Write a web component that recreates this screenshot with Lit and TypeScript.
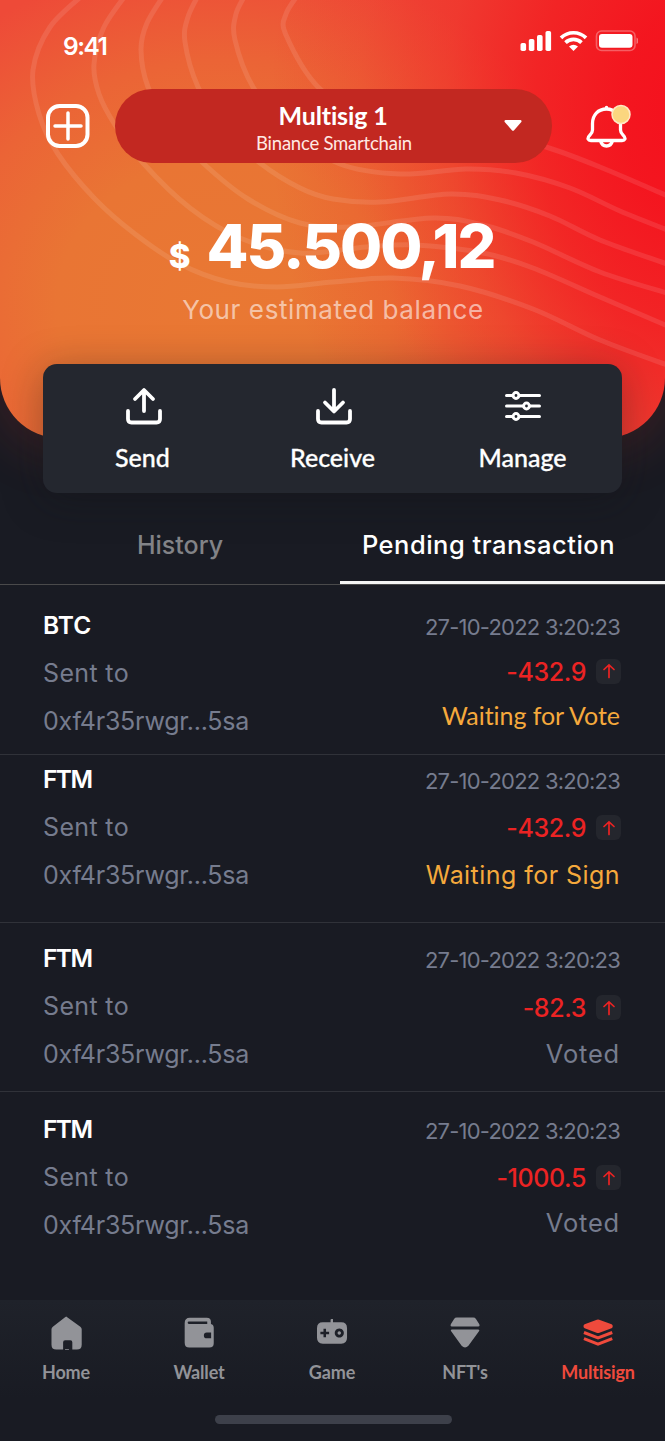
import { LitElement, html, css, svg } from "lit";
import { customElement } from "lit/decorators.js";

type Point = [number, number];

// Smooth open curve through a list of points.
const smooth = (p: Point[]) => {
  let d = `M${p[0][0]} ${p[0][1]}`;
  for (let i = 0; i < p.length - 1; i++) {
    const a = p[i - 1] ?? p[i], b = p[i], c = p[i + 1], e = p[i + 2] ?? c;
    d += `C${b[0] + (c[0] - a[0]) / 6} ${b[1] + (c[1] - a[1]) / 6} ${c[0] - (e[0] - b[0]) / 6} ${c[1] - (e[1] - b[1]) / 6} ${c[0]} ${c[1]}`;
  }
  return d;
};

const WAVES: Point[][] = [
  [[84, -6], [50, 27], [33, 70], [39, 114], [58, 154], [95, 199], [135, 234], [180, 264], [228, 282], [277, 287], [333, 282], [393, 278], [460, 286], [533, 309], [600, 340], [670, 366]],
  [[128, -8], [104, 27], [94, 64], [99, 94], [115, 125], [143, 163], [190, 208], [240, 238], [300, 253], [366, 247], [416, 245], [483, 253], [533, 268], [600, 297], [670, 327]],
  [[166, -8], [147, 23], [141, 50], [148, 87], [170, 127], [203, 163], [248, 199], [300, 223], [350, 227], [433, 218], [483, 225], [533, 242], [600, 272], [670, 294]],
  [[200, -8], [188, 17], [185, 42], [198, 87], [224, 129], [260, 163], [300, 188], [333, 199], [380, 202], [450, 194], [500, 200], [550, 216], [600, 240], [670, 265]],
  [[247, -8], [236, 14], [235, 40], [253, 87], [288, 130], [340, 164], [400, 174], [466, 169], [516, 173], [570, 188], [620, 211], [670, 231]],
  [[300, -8], [286, 14], [286, 35], [318, 87], [370, 122], [430, 135], [500, 137], [546, 147], [600, 167], [670, 197]],
];

const ROWS = [
  { coin: "BTC", amount: "-432.9", status: "Waiting for Vote", tone: "vote" },
  { coin: "FTM", amount: "-432.9", status: "Waiting for Sign", tone: "sign" },
  { coin: "FTM", amount: "-82.3", status: "Voted", tone: "done" },
  { coin: "FTM", amount: "-1000.5", status: "Voted", tone: "done" },
];

const NAV = [
  { label: "Home", icon: svg`<path d="M16 1.2 30.300 11.500q1.400 1 1.400 2.700V30q0 5-5 5H22v-7.500q0-2-2-2h-5.500q-2 0-2 2V35H5.500q-5 0-5-5V14.200q0-1.700 1.400-2.700L14.500 1.800q1.500-1.100 1.500-.6Z" /><path d="M14.500 34.500h4v.8h-4Z" />` },
  { label: "Wallet", icon: svg`<path fill-rule="evenodd" d="M6 2.300h17.500q4.300 0 4.300 4v2.300q2.900.7 2.900 4V28.500q0 4.500-4.500 4.500H5.500Q.7 33 .7 28V8Q.7 2.300 6 2.300ZM5 6.200q-1.200 0-1.200 1.200T5 8.600h19V6.200ZM23.500 17.500q-3 0-3 3t3 3H28V17.500Z" />` },
  { label: "Game", icon: svg`<path fill-rule="evenodd" d="M15 3.500h1.500V7H25q6 0 6 6v10q0 6-6 6H6q-6 0-6-6V13Q0 7 6 7h8V4.500q0-1 1-1ZM6.700 13.500v3.200H3.500v2.600h3.200v3.200h2.600v-3.200h3.200v-2.600H9.300V13.500ZM23 13.300a4.700 4.700 0 1 0 .01 0Zm0 2.900a1.800 1.800 0 1 1-.01 0Z" />` },
  { label: "NFT's", icon: svg`<path d="M7 2h17q1.800 0 2.800 1.500l3.300 5.300q1.200 2.400-1 2.400H2q-2.200 0-1-2.400L4.200 3.500Q5.200 2 7 2ZM2.200 14.300h26.700q2.100 0 1 2L19 31.200q-3.500 3.600-7 0L1.200 16.300q-1.100-2 1-2Z" />` },
  { label: "Multisign", icon: svg`<path d="M14.300 4.200q1.200-.5 2.400 0L29.500 9q1.200.5 1.200 2t-1.200 2.200L17 17.800q-1.500.6-3 0L1.700 13.200Q.5 12.500.5 11t1.200-2Z"/><path d="M1 17.500l14.500 5.500L30.200 17.500M1 23.800l14.500 5.700L30.200 23.800" fill="none" stroke="currentColor" stroke-width="3.200"/>` },
];

@customElement("app-root")
class AppRoot extends LitElement {
  static styles = css`
    :host { display: block; }
    * { box-sizing: border-box; }
    svg { display: block; flex: none; }
    .screen {
      width: 665px; height: 1441px; overflow: hidden; background: #191b23; color: #fff;
      font-family: Inter, "Open Sans", sans-serif; display: flex; flex-direction: column;
      white-space: nowrap; position: relative; font-variant-ligatures: none;
    }
    .hero {
      height: 438px; flex: none; position: relative; border-radius: 0 0 60px 60px;
      background:
        radial-gradient(ellipse 440px 560px at 710px 110px, #f50f1d 0%, #f4131ef2 20%, #f31a20c8 40%, #f1262578 60%, #f02c272e 80%, #f0302700 100%),
        radial-gradient(ellipse 400px 350px at 225px 305px, #e97833 0%, #e97534 42%, #eb6436 70%, #ee4a38 100%);
      box-shadow: 0 10px 55px #f03a2a30;
      display: flex; flex-direction: column; align-items: center;
    }
    .waves { position: absolute; inset: 0; }
    .status-bar { width: 100%; height: 89px; padding: 30px 27px 0 63px; display: flex; justify-content: space-between; position: relative; }
    .clock { font-size: 24.5px; line-height: 32px; font-weight: 600; letter-spacing: -1.5px; }
    .top-bar { width: 100%; height: 74px; padding: 0 33px 0 46px; display: grid; grid-template-columns: 69px 437px 1fr; align-items: center; position: relative; }
    .bell { justify-self: end; }
    .wallet-pick { height: 74px; border-radius: 37px; background: #c22821; position: relative; text-align: center; padding-top: 11px; font-family: Lato, sans-serif; }
    .wallet-name { font-size: 25px; line-height: 31px; font-weight: 700; letter-spacing: -.15px; margin-left: -1px; }
    .chain { font-size: 18.500px; line-height: 24px; color: #ffe9e4; letter-spacing: -.22px; padding-left: 1px; }
    .caret { position: absolute; right: 30px; top: 31px; }
    .balance { position: relative; height: 76px; margin: 45px 2px 0 0; display: flex; align-items: baseline; gap: 16px; font-weight: 800; line-height: 76px; }
    .currency { font-size: 33px; }
    .amount-total { font-size: 61px; letter-spacing: -2px; }
    .caption { position: relative; font-size: 26px; line-height: 32px; margin-top: 10px; color: #ffffff94; letter-spacing: .6px; padding-left: 1px; }
    .actions {
      position: relative; width: 579px; height: 129px; margin: -74px auto 0; flex: none; border-radius: 14px;
      background: #24272f; box-shadow: 0 6px 40px #10131659;
      display: grid; grid-template-columns: repeat(3, 190px); justify-content: center;
      font-family: Lato, sans-serif; font-size: 25px; font-weight: 500; -webkit-text-stroke: .3px #fff;
    }
    .action { display: flex; flex-direction: column; align-items: center; padding-top: 23px; line-height: 32px; gap: 16px; }
    .tabs { height: 92px; flex: none; display: flex; border-bottom: 1px solid #4a4a4b; font-size: 25px; font-weight: 500; text-align: center; line-height: 32px; position: relative; }
    .tab { width: 340px; padding: 36px 0 0 20px; color: #828387; }
    .tab.active { width: 325px; padding: 36px 28px 0 0; color: #fff; border-bottom: 3px solid #f4f4f4; }
    .pending { font-size: 25.500px; letter-spacing: .5px; }
    .list { flex: 1; display: grid; grid-template-rows: 170px 168px 169px 208px; color: #767c8e; font-size: 25px; line-height: 48px; }
    .row { display: flex; justify-content: space-between; padding: 0 45px 0 43px; border-bottom: 1px solid #303239; }
    .row:last-child { border: 0; }
    .side { display: flex; flex-direction: column; align-items: flex-start; }
    .side.end { align-items: flex-end; }
    .r0 { padding-top: 16px; } .r1 { padding-top: 0; } .r2 { padding-top: 11px; } .r3 { padding-top: 13px; }
    .coin { color: #fff; font-weight: 600; font-size: 24.500px; letter-spacing: -1.6px; }
    .r0 .coin { letter-spacing: 0; }
    .to { letter-spacing: .35px; }
    .address { letter-spacing: -.25px; }
    .date { font-size: 22px; letter-spacing: -.78px; margin-top: 2px; height: 47px; }
    .delta { display: flex; align-items: center; gap: 10px; color: #eb2323; font-weight: 500; height: 48px; letter-spacing: -.4px; margin-right: -1px; }
    .chip { width: 25px; height: 25px; border-radius: 6px; background: #24262d; display: grid; place-items: center; margin-top: -1px; }
    .state { height: 46px; line-height: 46px; }
    .r0 .delta { height: 43px; } .r0 .state { height: 46px; line-height: 44px; }
    .r2 .delta { height: 50px; } .r2 .state { line-height: 42px; }
    .r3 .delta { height: 48px; } .r3 .state { line-height: 41px; }
    .vote { font-family: Lato, sans-serif; color: #f5a93c; letter-spacing: -.05px; }
    .sign { color: #f5a93c; letter-spacing: .45px; }
    .done { font-size: 25.500px; letter-spacing: .8px; }
    .nav { height: 98px; flex: none; background: linear-gradient(#1f222a, #191b23); display: grid; grid-template-columns: repeat(5, 133px); font: 700 18px/24px Lato, sans-serif; color: #929398; letter-spacing: -.15px; font-variant-ligatures: none; }
    .item { display: flex; flex-direction: column; align-items: center; padding-top: 15px; gap: 9px; }
    .name { margin-left: -1px; }
    .item.active { color: #ef4a3c; }
    .home { height: 43px; flex: none; padding: 17px 0 0 215px; }
    .bar { width: 237px; height: 9px; border-radius: 5px; background: #3d404a; }
  `;

  render() {
    return html`<div class="screen">
      <header class="hero">
        <svg class="waves" width="665" height="438" fill="none" stroke="#fff" stroke-opacity=".1" stroke-width="5">
          ${WAVES.map((w) => svg`<path d=${smooth(w)} />`)}
        </svg>
        <div class="status-bar">
          <span class="clock">9:41</span>
          <svg width="118" height="22" viewBox="520 30 118 22">
            <g fill="#fff"><rect x="520.500" y="43" width="5.600" height="8" rx="1.800"/><rect x="528.800" y="39" width="5.600" height="12" rx="1.800"/><rect x="537" y="35" width="5.600" height="16" rx="1.800"/><rect x="545.500" y="31" width="5.600" height="20" rx="1.800"/></g>
            <g fill="none" stroke="#fff" stroke-width="3.700"><path d="M561 37.800a18 18 0 0 1 25 0M565.500 42.700a11.500 11.500 0 0 1 16 0"/></g><path d="M573.500 51l-4.500-4.600q4.500-3.300 9 0Z" fill="#fff"/>
            <rect x="596.500" y="31" width="38.500" height="19.500" rx="5" fill="none" stroke="#fff" stroke-opacity=".3" stroke-width="1.600"/><rect x="599" y="34" width="33.500" height="13.800" rx="3" fill="#fff"/><path d="M636.500 37.500q2 1 2 3.300t-2 3.300Z" fill="#fff" fill-opacity=".4"/>
          </svg>
        </div>
        <div class="top-bar">
          <svg width="44" height="44" fill="none" stroke="#fff" stroke-linecap="round"><rect x="2" y="2" width="39.500" height="40" rx="11.500" stroke-width="4"/><path d="M9 22h26M22 9v26" stroke-width="3.500"/></svg>
          <div class="wallet-pick">
            <div class="wallet-name">Multisig 1</div>
            <div class="chain">Binance Smartchain</div>
            <svg class="caret" width="18" height="12" fill="#fff"><path d="M1.500 0h15q1.600.6.800 1.900l-7.200 8.300q-1.100 1.200-2.200 0L.7 1.900Q-.1.600 1.500 0Z"/></svg>
          </div>
          <svg class="bell" width="46" height="46" viewBox="586 102 46 46" fill="none" stroke="#fff" stroke-width="3.300" stroke-linejoin="round" stroke-linecap="round">
            <path d="M606.500 108c-8.500 0-14 6-14 14.500v6.500q0 2.500-2.600 5.200c-3.500 3.500-1.500 5.300 1 5.300h31.200c2.500 0 4.500-1.800 1-5.300q-2.600-2.700-2.600-5.200v-6.500c0-8.500-5.500-14.500-14-14.500ZM600.500 140q1.500 5 6 5t6-5"/>
            <circle cx="606.500" cy="106.500" r="1" stroke-width="1.500"/>
            <circle cx="621" cy="113.500" r="9" fill="#fbd67f" stroke="#ffe9c4" stroke-width="1.500"/>
          </svg>
        </div>
        <div class="balance"><span class="currency">$</span><span class="amount-total">45.500,12</span></div>
        <div class="caption">Your estimated balance</div>
      </header>
      <section class="actions">
        <div class="action"><svg width="38" height="38" fill="none" stroke="#fff" stroke-width="3.800" stroke-linecap="round" stroke-linejoin="round"><path d="M4 24v8q0 3.500 3.500 3.500H32.500q3.500 0 3.500-3.500v-8M20 24V3.500M11 12 20 3l9 9"/></svg><span>Send</span></div>
        <div class="action"><svg width="38" height="38" fill="none" stroke="#fff" stroke-width="3.800" stroke-linecap="round" stroke-linejoin="round"><path d="M4 24v8q0 3.500 3.500 3.500H32.500q3.500 0 3.500-3.500v-8M20 3V24M11 15.500 20 24.500l9-9"/></svg><span>Receive</span></div>
        <div class="action"><svg width="38" height="38" fill="#24272f" stroke="#fff" stroke-width="3" stroke-linecap="round"><path d="M2.500 8.500h33M2.500 19h33M2.500 29.500h33"/><circle cx="12" cy="8.500" r="2.900"/><circle cx="22.500" cy="19" r="2.900"/><circle cx="12" cy="29.500" r="2.900"/></svg><span>Manage</span></div>
      </section>
      <nav class="tabs"><div class="tab"><span class="history">History</span></div><div class="tab active"><span class="pending">Pending transaction</span></div></nav>
      <main class="list">
        ${ROWS.map((r, i) => html`<article class="row r${i}">
          <div class="side"><span class="coin">${r.coin}</span><span class="to">Sent to</span><span class="address">0xf4r35rwgr...5sa</span></div>
          <div class="side end">
            <span class="date">27-10-2022 3:20:23</span>
            <span class="delta"><span>${r.amount}</span><span class="chip"><svg width="14" height="16" fill="none" stroke="#eb2323" stroke-width="1.700" stroke-linecap="round"><path d="M7 14.500V2M2 6.500 7 1.800l5 4.700"/></svg></span></span>
            <span class="state ${r.tone}">${r.status}</span>
          </div>
        </article>`)}
      </main>
      <nav class="nav">
        ${NAV.map((n) => html`<div class="item ${n.label === "Multisign" ? "active" : ""}"><svg width="31" height="36" viewBox="0 0 32 36" fill="currentColor">${n.icon}</svg><span class="name">${n.label}</span></div>`)}
      </nav>
      <div class="home"><div class="bar"></div></div>
    </div>`;
  }
}
